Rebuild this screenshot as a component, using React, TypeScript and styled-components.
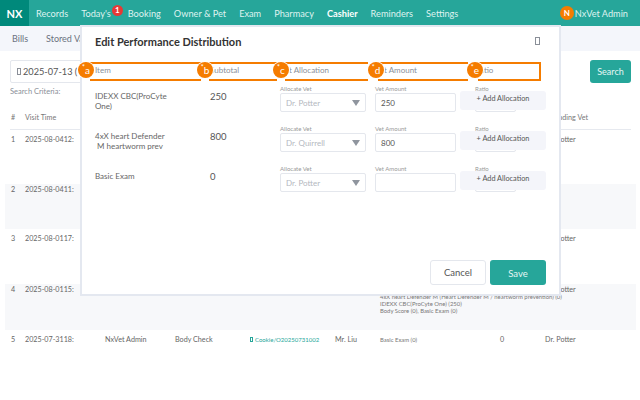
import React from "react";
import { createGlobalStyle, styled } from "styled-components";

const teal = "#26a69a";
const orange = "#f57c00";

const navItems = ["Records", "Today's", "Booking", "Owner & Pet", "Exam", "Pharmacy", "Cashier", "Reminders", "Settings"];

const rows = [
  { no: 1, time: "2025-08-0412:", height: 54, striped: false, staff: "", kind: "", order: "", client: "", items: [], amount: "", vet: "Dr. Potter" },
  { no: 2, time: "2025-08-0411:", height: 45, striped: true, staff: "", kind: "", order: "", client: "", items: [], amount: "", vet: "" },
  { no: 3, time: "2025-08-0117:", height: 55, striped: false, staff: "", kind: "", order: "", client: "", items: [], amount: "", vet: "Dr. Potter" },
  {
    no: 4,
    time: "2025-08-0115:",
    height: 46,
    striped: true,
    staff: "",
    kind: "",
    order: "",
    client: "",
    items: [
      "",
      "4xX heart Defender M (Heart Defender M / heartworm prevention) (0)",
      "IDEXX CBC(ProCyte One) (250)",
      "Body Score (0), Basic Exam (0)",
    ],
    amount: "",
    vet: "Dr. Potter",
  },
  {
    no: 5,
    time: "2025-07-3118:",
    height: 46,
    striped: false,
    staff: "NxVet Admin",
    kind: "Body Check",
    order: "Cookie/O20250731002",
    client: "Mr. Liu",
    items: ["Basic Exam (0)"],
    amount: "0",
    vet: "Dr. Potter",
  },
];

const allocations = [
  { name: ["IDEXX CBC(ProCyte", "One)"], subtotal: "250", vet: "Dr. Potter", amount: "250" },
  { name: ["4xX heart Defender", "\u00a0M heartworm prev"], subtotal: "800", vet: "Dr. Quirrell", amount: "800" },
  { name: ["Basic Exam"], subtotal: "0", vet: "Dr. Potter", amount: "" },
];

// callouts drawn over the column header, left values are from the modal's inner edge
const marks = [
  { letter: "a", dot: -4, left: 8, width: 111 },
  { letter: "b", dot: 115, left: 127, width: 68 },
  { letter: "c", dot: 191, left: 203, width: 83 },
  { letter: "d", dot: 286, left: 296, width: 90 },
  { letter: "e", dot: 385, left: 396, width: 63 },
];

export default function App() {
  return (
    <Page>
      <GlobalStyle />
      <NavBar>
        <Brand>NX</Brand>
        <NavList>
          {navItems.map((item) => (
            <NavItem key={item} $active={item === "Cashier"}>
              {item}
              {item === "Today's" && <CountBadge>1</CountBadge>}
            </NavItem>
          ))}
        </NavList>
        <UserBox>
          <Avatar>N</Avatar>
          NxVet Admin
        </UserBox>
      </NavBar>
      <SubNav>
        <SubTab>Bills</SubTab>
        <SubTab>Stored Value</SubTab>
      </SubNav>
      <Content>
        <SearchRow>
          <DateBox>
            <Tofu />
            2025-07-13 (
          </DateBox>
          <SearchButton>Search</SearchButton>
        </SearchRow>
        <Criteria>Search Criteria:</Criteria>
        <HeaderRow>
          <NoCell>#</NoCell>
          <TimeCell>Visit Time</TimeCell>
          <StaffCell />
          <KindCell />
          <OrderCell />
          <ClientCell />
          <ItemsCell />
          <AmountCell />
          <VetCell>Attending Vet</VetCell>
        </HeaderRow>
        {rows.map((row) => (
          <Row key={row.no} $height={row.height} $striped={row.striped}>
            <NoCell>{row.no}</NoCell>
            <TimeCell>{row.time}</TimeCell>
            <StaffCell>{row.staff}</StaffCell>
            <KindCell>{row.kind}</KindCell>
            <OrderCell>
              {row.order && (
                <OrderLink>
                  <TinyTofu />
                  {row.order}
                </OrderLink>
              )}
            </OrderCell>
            <ClientCell>{row.client}</ClientCell>
            <ItemsCell>
              {row.items.map((line, i) => (
                <ItemLine key={i}>{line || "\u00a0"}</ItemLine>
              ))}
            </ItemsCell>
            <AmountCell>{row.amount}</AmountCell>
            <VetCell>{row.vet}</VetCell>
          </Row>
        ))}
      </Content>

      <Modal>
        <ModalHead>
          <ModalTitle>Edit Performance Distribution</ModalTitle>
          <CloseTofu />
        </ModalHead>
        <ColumnHead>
          <ItemCol>Item</ItemCol>
          <SubtotalCol>Subtotal</SubtotalCol>
          <VetCol>Vet Allocation</VetCol>
          <AmountCol>Vet Amount</AmountCol>
          <RatioCol>Ratio</RatioCol>
        </ColumnHead>
        {allocations.map((a) => (
          <AllocRow key={a.name[0]}>
            <ItemName>
              {a.name.map((line) => (
                <div key={line}>{line}</div>
              ))}
            </ItemName>
            <Subtotal>{a.subtotal}</Subtotal>
            <VetCol>
              <FieldLabel>Allocate Vet</FieldLabel>
              <SelectBox>
                {a.vet}
                <Caret />
              </SelectBox>
            </VetCol>
            <AmountCol>
              <FieldLabel>Vet Amount</FieldLabel>
              <AmountBox>{a.amount}</AmountBox>
            </AmountCol>
            <RatioCol>
              <FieldLabel>Ratio</FieldLabel>
              <RatioBox />
              <AddButton>+ Add Allocation</AddButton>
            </RatioCol>
          </AllocRow>
        ))}
        <Footer>
          <CancelButton>Cancel</CancelButton>
          <SaveButton>Save</SaveButton>
        </Footer>
        {marks.map((m) => (
          <MarkBox key={m.letter} $left={m.left} $width={m.width} $last={m.letter === "e"} />
        ))}
        {marks.map((m) => (
          <MarkDot key={m.letter} $left={m.dot}>
            <sup>*</sup>
            {m.letter}
          </MarkDot>
        ))}
      </Modal>
    </Page>
  );
}

const GlobalStyle = createGlobalStyle`
  html, body {
    margin: 0;
    background: #fff;
    font-family: Lato, "Open Sans", sans-serif;
    color: #606266;
  }
`;

const Page = styled.div`
  position: relative;
  width: 640px;
  height: 400px;
  overflow: hidden;
  font-size: 8px;
`;

const NavBar = styled.div`
  display: flex;
  align-items: center;
  height: 26px;
  background: ${teal};
  color: #dff3f0;
  font-size: 9.2px;
`;

const Brand = styled.div`
  display: flex;
  align-items: center;
  justify-content: center;
  width: 29px;
  height: 100%;
  background: #00897b;
  color: #fff;
  font-size: 11px;
  font-weight: 700;
`;

const NavList = styled.div`
  display: flex;
  gap: 13px;
  margin-left: 7px;
`;

const NavItem = styled.div<{ $active?: boolean }>`
  position: relative;
  font-weight: ${(p) => (p.$active ? 700 : 400)};
  color: ${(p) => (p.$active ? "#fff" : "#dff3f0")};
  &:nth-child(2) {
    margin-right: 4px;
  }
`;

const CountBadge = styled.span`
  position: absolute;
  top: -3px;
  right: -12px;
  width: 11px;
  height: 11px;
  border-radius: 50%;
  background: #e53935;
  color: #fff;
  font-size: 8px;
  font-weight: 700;
  line-height: 11px;
  text-align: center;
`;

const UserBox = styled.div`
  display: flex;
  align-items: center;
  gap: 1px;
  margin-left: auto;
  margin-right: 12px;
`;

const Avatar = styled.span`
  width: 14px;
  height: 14px;
  border-radius: 50%;
  background: ${orange};
  color: #fff;
  font-size: 8px;
  font-weight: 700;
  line-height: 14px;
  text-align: center;
`;

const SubNav = styled.div`
  display: flex;
  align-items: center;
  gap: 18px;
  height: 25px;
  padding-left: 12px;
  background: #f4f6fb;
`;

const SubTab = styled.div`
  font-size: 9px;
  color: #6b7280;
`;

const Content = styled.div`
  display: flex;
  flex-direction: column;
  padding: 9px 4px 0 5px;
`;

const SearchRow = styled.div`
  display: flex;
  align-items: center;
  justify-content: space-between;
  padding: 0 5px;
`;

const Tofu = styled.span`
  display: inline-block;
  width: 2px;
  height: 5px;
  margin: 0 2px 0 1px;
  border: 1px solid #8a8f98;
`;

const TinyTofu = styled(Tofu)`
  height: 3px;
  width: 1px;
  margin-left: 0;
  border-color: ${teal};
`;

const DateBox = styled.div`
  display: flex;
  align-items: center;
  width: 150px;
  height: 23px;
  padding-left: 5px;
  box-sizing: border-box;
  border: 1px solid #e4e7ed;
  border-radius: 2px;
  font-size: 9.2px;
  color: #555;
`;

const SearchButton = styled.div`
  display: flex;
  align-items: center;
  justify-content: center;
  width: 41px;
  height: 23px;
  border-radius: 3px;
  background: ${teal};
  color: #e6f6f4;
  font-size: 9px;
`;

const Criteria = styled.div`
  margin: 4px 0 0 5px;
  height: 22px;
  font-size: 7.5px;
  color: #8a8f98;
`;

const HeaderRow = styled.div`
  display: flex;
  align-items: center;
  height: 17px;
  margin: 0 5px;
  border-bottom: 1px solid #e6e9ef;
  padding-bottom: 3px;
  font-size: 7.2px;
  color: #777;
`;

const Row = styled.div<{ $height: number; $striped: boolean }>`
  display: flex;
  height: ${(p) => p.$height}px;
  padding: ${(p) => (p.$striped ? 1 : 5)}px 5px 0;
  box-sizing: border-box;
  background: ${(p) => (p.$striped ? "#f7f8fa" : "#fff")};
  font-size: 7.2px;
  line-height: 10px;
  color: #666;
`;

const NoCell = styled.div`
  width: 15px;
  flex: none;
  padding-left: 1px;
  box-sizing: border-box;
`;

const TimeCell = styled.div`
  width: 80px;
  flex: none;
`;

const StaffCell = styled.div`
  width: 70px;
  flex: none;
`;

const KindCell = styled.div`
  width: 75px;
  flex: none;
`;

const OrderCell = styled.div`
  width: 85px;
  flex: none;
`;

const OrderLink = styled.span`
  font-size: 6px;
  color: ${teal};
`;

const ClientCell = styled.div`
  width: 45px;
  flex: none;
`;

const ItemsCell = styled.div`
  display: flex;
  flex-direction: column;
  width: 120px;
  flex: none;
  margin-top: 0.5px;
`;

const ItemLine = styled.div`
  font-size: 5.9px;
  line-height: 7.3px;
  white-space: nowrap;
  color: #777;
`;

const AmountCell = styled.div`
  width: 45px;
  flex: none;
`;

const VetCell = styled.div`
  white-space: nowrap;
`;

const Modal = styled.div`
  position: absolute;
  top: 25px;
  left: 80px;
  width: 481px;
  height: 271px;
  box-sizing: border-box;
  padding: 0 13px;
  border: 2px solid #e4e8f0;
  background: #fff;
`;

const ModalHead = styled.div`
  display: flex;
  align-items: center;
  justify-content: space-between;
  height: 26px;
  padding-top: 1px;
`;

const ModalTitle = styled.div`
  font-size: 11px;
  font-weight: 700;
  color: #333;
`;

const CloseTofu = styled(Tofu)`
  width: 3px;
  height: 6px;
  margin-right: 6px;
`;

const ColumnHead = styled.div`
  display: flex;
  align-items: center;
  height: 18px;
  margin-top: 7px;
  font-size: 8px;
  color: #8a8f98;
`;

const ItemCol = styled.div`
  width: 115px;
  flex: none;
`;

const SubtotalCol = styled.div`
  width: 70px;
  flex: none;
`;

const VetCol = styled.div`
  position: relative;
  width: 95px;
  flex: none;
`;

const AmountCol = styled.div`
  width: 100px;
  flex: none;
`;

const RatioCol = styled.div`
  position: relative;
  width: 70px;
  flex: none;
`;

const AllocRow = styled.div`
  display: flex;
  height: 40px;
  padding-top: 6px;
  box-sizing: border-box;
`;

const ItemName = styled(ItemCol)`
  padding-top: 7px;
  font-size: 8px;
  line-height: 9.5px;
  color: #666;
`;

const Subtotal = styled(SubtotalCol)`
  padding-top: 6px;
  font-size: 9.5px;
  color: #555;
`;

const FieldLabel = styled.div`
  height: 8px;
  font-size: 6px;
  line-height: 8px;
  color: #999;
`;

const SelectBox = styled.div`
  display: flex;
  align-items: center;
  justify-content: space-between;
  width: 86px;
  height: 19px;
  padding: 0 5px;
  box-sizing: border-box;
  border: 1px solid #e4e7ed;
  border-radius: 2px;
  font-size: 8px;
  color: #b4b8c0;
`;

const Caret = styled.span`
  width: 0;
  height: 0;
  border-left: 4.5px solid transparent;
  border-right: 4.5px solid transparent;
  border-top: 6px solid #8f959e;
`;

const AmountBox = styled.div`
  display: flex;
  align-items: center;
  width: 81px;
  height: 19px;
  padding-left: 5px;
  box-sizing: border-box;
  border: 1px solid #e4e7ed;
  border-radius: 2px;
  font-size: 8px;
  color: #555;
`;

const RatioBox = styled.div`
  width: 41px;
  height: 19px;
  box-sizing: border-box;
  border: 1px solid #e4e7ed;
  border-radius: 2px;
`;

const AddButton = styled.div`
  position: absolute;
  top: 6px;
  left: -15px;
  display: flex;
  align-items: center;
  justify-content: center;
  width: 86px;
  height: 19px;
  padding-bottom: 5px;
  box-sizing: border-box;
  border-radius: 3px;
  background: #f4f5fa;
  font-size: 7.3px;
  color: #555;
`;

const Footer = styled.div`
  position: absolute;
  right: 13px;
  bottom: 9px;
  display: flex;
  gap: 4px;
`;

const CancelButton = styled.div`
  display: flex;
  align-items: center;
  justify-content: center;
  width: 56px;
  height: 25px;
  box-sizing: border-box;
  border: 1px solid #e4e7ed;
  border-radius: 3px;
  font-size: 9.5px;
  color: #555;
`;

const SaveButton = styled(CancelButton)`
  border: 0;
  background: ${teal};
  color: #e6f6f4;
  padding-top: 2px;
`;

const MarkBox = styled.div<{ $left: number; $width: number; $last: boolean }>`
  position: absolute;
  top: 35px;
  left: ${(p) => p.$left}px;
  width: ${(p) => p.$width}px;
  height: 19px;
  box-sizing: border-box;
  border-top: 2px solid ${orange};
  border-bottom: 2px solid ${orange};
  border-right: ${(p) => (p.$last ? `2px solid ${orange}` : "0")};
`;

const MarkDot = styled.div<{ $left: number }>`
  position: absolute;
  top: 35px;
  left: ${(p) => p.$left}px;
  width: 16px;
  height: 16px;
  border-radius: 50%;
  background: ${orange};
  box-shadow: 0 0 0 1px #fff;
  color: #fff;
  font-size: 10px;
  line-height: 16px;
  text-align: center;
  sup {
    font-size: 7px;
    line-height: 0;
  }
`;
